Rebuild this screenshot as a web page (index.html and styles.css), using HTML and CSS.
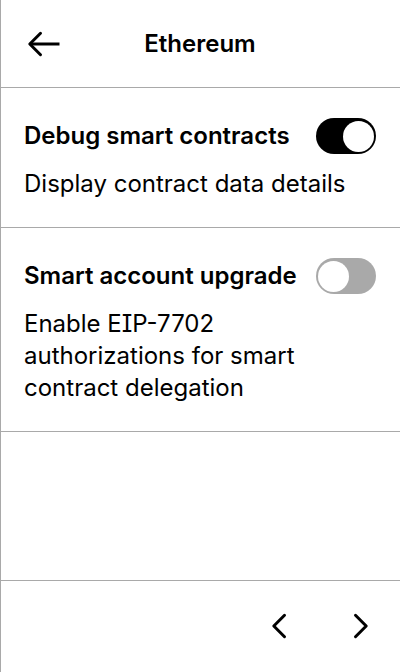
FILE: index.html
```html
<!DOCTYPE html>
<html lang="en">
<head>
<meta charset="utf-8">
<meta name="viewport" content="width=device-width, initial-scale=1">
<title>Ethereum</title>
<link rel="stylesheet" href="styles.css">
</head>
<body>
<main class="screen">
  <header class="header">
    <button class="icon-button" aria-label="Back">
      <svg width="40" height="40" viewBox="0 0 40 40"><path d="M35.500 20H6"/><path class="tip" d="M16.500 9.300L5.800 20L16.500 30.700"/></svg>
    </button>
    <h1 class="title">Ethereum</h1>
  </header>
  <section class="setting">
    <div class="setting-row">
      <label class="setting-name" for="debug">Debug smart contracts</label>
      <input class="switch" type="checkbox" role="switch" id="debug" checked>
    </div>
    <p class="description">Display contract data details</p>
  </section>
  <section class="setting">
    <div class="setting-row">
      <label class="setting-name" for="upgrade">Smart account upgrade</label>
      <input class="switch" type="checkbox" role="switch" id="upgrade">
    </div>
    <p class="description">Enable EIP-7702 authorizations for smart contract delegation</p>
  </section>
  <nav class="footer" aria-label="Pages">
    <button class="icon-button" aria-label="Previous">
      <svg width="40" height="40" viewBox="0 0 40 40"><path class="tip" d="M28.500 9.300L17.800 20L28.500 30.700"/></svg>
    </button>
    <button class="icon-button" aria-label="Next">
      <svg width="40" height="40" viewBox="0 0 40 40"><path class="tip" d="M19.500 9.300L30.200 20L19.500 30.700"/></svg>
    </button>
  </nav>
</main>
</body>
</html>
```
FILE: styles.css
```css
* {
  box-sizing: border-box;
}

body {
  margin: 0;
  background: #fff;
  color: #000;
  font-family: Inter, sans-serif;
  font-size: 24px;
  font-feature-settings: "cv08";
  line-height: 32px;
}

.screen {
  display: flex;
  flex-direction: column;
  min-height: 100vh;
  border-left: 1px solid #a9a9a9;
}

.header {
  display: grid;
  grid-template-columns: 40px 1fr 40px;
  align-items: center;
  padding: 24px 24px 23px 23px;
  border-bottom: 1px solid #a9a9a9;
}

.title {
  margin: 0;
  font-size: 24px;
  font-weight: 600;
  text-align: center;
}

.icon-button {
  display: flex;
  height: 40px;
  padding: 0;
  border: 0;
  background: none;
}

.icon-button svg {
  fill: none;
  stroke: #000;
  stroke-width: 3;
}

.tip {
  stroke-linecap: round;
  stroke-linejoin: round;
}

.setting {
  padding: 28px 24px 27px 23px;
  border-bottom: 1px solid #a9a9a9;
}

.setting-row {
  display: flex;
  align-items: center;
  justify-content: space-between;
  height: 40px;
}

.setting-name {
  font-weight: 600;
}

.switch {
  appearance: none;
  display: flex;
  flex: none;
  align-items: center;
  width: 60px;
  height: 36px;
  margin: 0;
  padding: 2px;
  border-radius: 18px;
  background: #a9a9a9;
}

.switch::before {
  content: "";
  width: 31px;
  height: 31px;
  border-radius: 50%;
  background: #fff;
}

.switch:checked {
  justify-content: flex-end;
  background: #000;
}

.description {
  margin: 12px 0 0;
}

.footer {
  display: flex;
  justify-content: flex-end;
  gap: 40px;
  margin-top: auto;
  padding: 25px 24px 26px 23px;
  border-top: 1px solid #a9a9a9;
}
```
